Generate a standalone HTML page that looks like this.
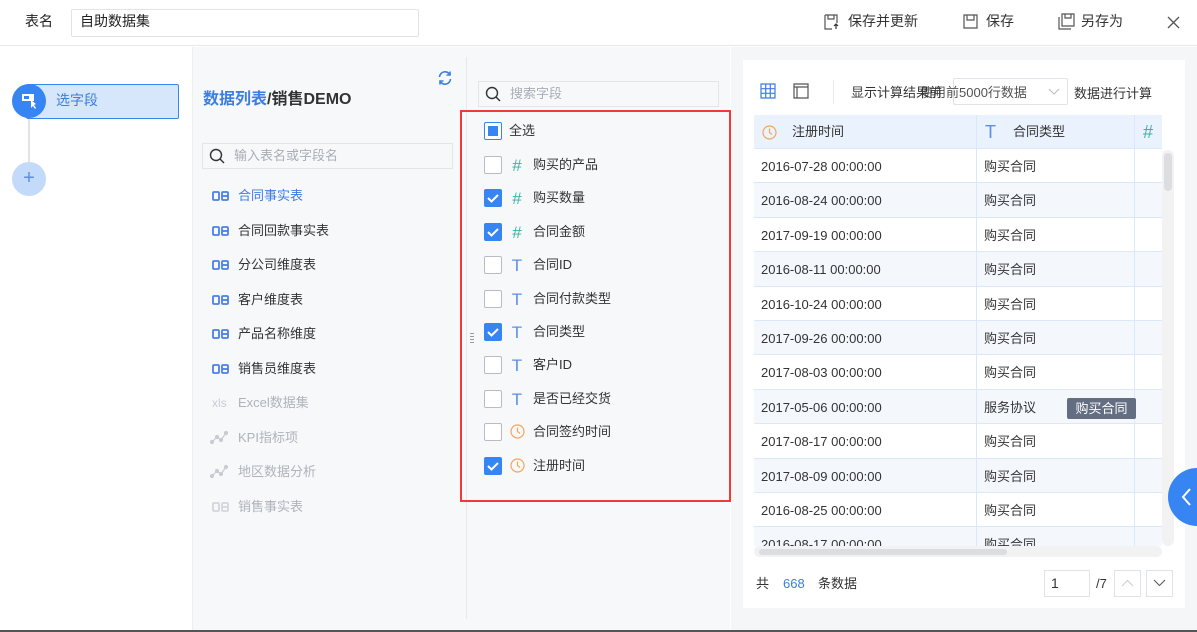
<!DOCTYPE html>
<html><head><meta charset="utf-8"><style>
*{box-sizing:border-box;margin:0;padding:0}
body{width:1197px;height:632px;overflow:hidden;background:#fff;font-family:"Liberation Sans","Noto Sans CJK SC",sans-serif;font-size:13px;line-height:17px;color:#333;position:relative}
.a{position:absolute}
.t{white-space:nowrap}
.cb{position:absolute;left:484px;width:18px;height:18px;border:1px solid #b7bcc6;border-radius:2px;background:#fff}
.cb.on{background:#3685f2;border-color:#3685f2}
.fi{position:absolute;left:509px;width:16px;text-align:center;font-size:17px;line-height:18px}
.fl{position:absolute;left:533px}
.li{position:absolute;left:212px}
.lt{position:absolute;left:238px}
.row{position:absolute;left:754px;width:408px;height:34.4px;border-bottom:1px solid #dbe8fb}
.row span{position:absolute;top:9px;line-height:17px}
.db{position:absolute;left:212px;width:17px;height:10px}
</style></head><body>
<div class="a" style="left:0;top:0;width:1197px;height:46px;border-bottom:1px solid #e6e8ec;background:#fff"></div>
<div class="a t" style="left:25px;top:13px;font-size:14px;color:#222">表名</div>
<div class="a" style="left:71px;top:9px;width:348px;height:28px;border:1px solid #e0e3e8;border-radius:2px"></div>
<div class="a t" style="left:80px;top:13px;font-size:14px;color:#222">自助数据集</div>
<svg class="a" style="left:824px;top:14px" width="16" height="16" viewBox="0 0 16 16" fill="none" stroke="#555" stroke-width="1.2"><path d="M1 1h12v8M1 1v14h7M4 1v4h6V1"/><path d="M12 15v-5M10 12l2-2 2 2" stroke="#333"/></svg>
<div class="a t" style="left:848px;top:13px;font-size:14px">保存并更新</div>
<svg class="a" style="left:963px;top:14px" width="15" height="15" viewBox="0 0 15 15" fill="none" stroke="#555" stroke-width="1.2"><path d="M1 1h13v13H1zM4 1v5h7V1"/></svg>
<div class="a t" style="left:986px;top:13px;font-size:14px">保存</div>
<svg class="a" style="left:1058px;top:13px" width="17" height="17" viewBox="0 0 17 17" fill="none" stroke="#555" stroke-width="1.2"><path d="M4 1h12v12H4zM7 1v4h6V1M1 4v12h12"/></svg>
<div class="a t" style="left:1081px;top:13px;font-size:14px">另存为</div>
<svg class="a" style="left:1167px;top:16px" width="13" height="13" viewBox="0 0 13 13" stroke="#555" stroke-width="1.3"><path d="M1 1l11 11M12 1L1 12"/></svg>

<div class="a" style="left:0;top:47px;width:192px;height:585px;background:#fff"></div>
<div class="a" style="left:28px;top:110px;width:2px;height:70px;background:#e2e4e8"></div>
<div class="a" style="left:26px;top:84px;width:153px;height:35px;background:#d6e6fb;border:1px solid #3685f2;border-radius:2px"></div>
<div class="a" style="left:12px;top:84px;width:34px;height:34px;border-radius:50%;background:#3685f2"></div>
<svg class="a" style="left:21px;top:93px" width="17" height="16" viewBox="0 0 17 16"><rect x="1" y="1" width="12" height="7" fill="#fff"/><rect x="3" y="3" width="5" height="3" fill="#3685f2"/><path d="M10 7l5 4-2 1 2 3-1 1-2-3-2 2z" fill="#fff"/></svg>
<div class="a t" style="left:56px;top:92px;font-size:14px;color:#3d7de0">选字段</div>
<div class="a" style="left:12px;top:162px;width:34px;height:34px;border-radius:50%;background:#c3dafa;color:#5b8fe6;text-align:center;line-height:32px;font-size:20px">+</div>

<div class="a" style="left:192px;top:47px;width:538px;height:585px;background:#f7f8fa;border-left:1px solid #eceef2"></div>
<div class="a" style="left:466px;top:57px;width:1px;height:562px;background:#e6e8ec"></div>
<div class="a t" style="left:203px;top:90px;font-size:16px;line-height:20px;font-weight:bold;color:#3d7de0">数据列表<span style="color:#333">/销售DEMO</span></div>
<svg class="a" style="left:437px;top:70px" width="16" height="16" viewBox="0 0 16 16" fill="none" stroke="#3d7de0" stroke-width="1.6"><path d="M2.5 7A5.5 5.5 0 0 1 13 5M13.5 9A5.5 5.5 0 0 1 3 11"/><path d="M13 1.5V5H9.5M3 14.5V11h3.5"/></svg>
<div class="a" style="left:202px;top:143px;width:251px;height:26px;border:1px solid #e3e5e9;background:#f7f8fa"></div>
<svg class="a" style="left:209px;top:148px" width="16" height="16" viewBox="0 0 16 16" fill="none" stroke="#333" stroke-width="1.4"><circle cx="7" cy="7" r="5.5"/><path d="M11 11l4 4"/></svg>
<div class="a t" style="left:234px;top:147px;color:#a8adb6">输入表名或字段名</div>
<div id="list"></div>
<div class="li t" style="top:395px;font-size:12px;color:#c8ccd2">xls</div><div class="lt t" style="top:394px;color:#aeb3bb">Excel数据集</div>
<svg class="a" style="left:210px;top:429px" width="18" height="16" viewBox="0 0 18 16" fill="#c8ccd2" stroke="#c8ccd2"><path d="M2 13l5-5 4 3 5-7" fill="none" stroke-width="1.2"/><circle cx="2" cy="13" r="1.6"/><circle cx="7" cy="8" r="1.6"/><circle cx="11" cy="11" r="1.6"/><circle cx="16" cy="4" r="1.6"/></svg><div class="lt t" style="top:429px;color:#aeb3bb">KPI指标项</div>
<svg class="a" style="left:210px;top:463px" width="18" height="16" viewBox="0 0 18 16" fill="#c8ccd2" stroke="#c8ccd2"><path d="M2 13l5-5 4 3 5-7" fill="none" stroke-width="1.2"/><circle cx="2" cy="13" r="1.6"/><circle cx="7" cy="8" r="1.6"/><circle cx="11" cy="11" r="1.6"/><circle cx="16" cy="4" r="1.6"/></svg><div class="lt t" style="top:463px;color:#aeb3bb">地区数据分析</div>

<div class="a" style="left:478px;top:81px;width:241px;height:26px;border:1px solid #e3e5e9;background:#f7f8fa"></div>
<svg class="a" style="left:485px;top:86px" width="16" height="16" viewBox="0 0 16 16" fill="none" stroke="#333" stroke-width="1.4"><circle cx="7" cy="7" r="5.5"/><path d="M11 11l4 4"/></svg>
<div class="a t" style="left:510px;top:85px;color:#a8adb6">搜索字段</div>
<div class="a" style="left:460px;top:110px;width:271px;height:392px;border:2px solid #f0393b"></div>
<div class="cb" style="top:122px;border-color:#3685f2"><div style="position:absolute;left:3px;top:3px;width:10px;height:10px;background:#3685f2"></div></div><div class="a t" style="left:509px;top:122px">全选</div>
<div id="fields"></div>
<div class="a" style="left:470px;top:333px;width:4px;height:12px;background:repeating-linear-gradient(#999 0 1px,transparent 1px 3px)"></div>
<div class="a" style="left:735px;top:333px;width:4px;height:12px;background:repeating-linear-gradient(#999 0 1px,transparent 1px 3px)"></div>

<div class="a" style="left:731px;top:47px;width:466px;height:585px;background:#f5f6f8"></div>
<div class="a" style="left:743px;top:60px;width:442px;height:548px;background:#fff"></div>
<svg class="a" style="left:760px;top:83px" width="16" height="16" viewBox="0 0 16 16" fill="none" stroke="#3d7de0" stroke-width="1.2"><path d="M1 1h14v14H1zM1 5.7h14M1 10.3h14M5.7 1v14M10.3 1v14"/></svg>
<svg class="a" style="left:793px;top:83px" width="16" height="16" viewBox="0 0 16 16" fill="none" stroke="#555" stroke-width="1.2"><path d="M1 1h14v14H1zM1 4h14M4 4v11"/></svg>
<div class="a" style="left:833px;top:80px;width:1px;height:24px;background:#e6e8ec"></div>
<div class="a t" style="left:851px;top:84px">显示计算结果前</div>
<div class="a" style="left:953px;top:78px;width:115px;height:27px;border:1px solid #e0e3e8;border-radius:2px;background:#fff"></div>
<div class="a t" style="left:920px;top:84px;opacity:.85">使用前5000行数据</div>
<svg class="a" style="left:1048px;top:88px" width="12" height="7" viewBox="0 0 12 7" fill="none" stroke="#bbb"><path d="M1 1l5 5 5-5"/></svg>
<div class="a t" style="left:1074px;top:85px">数据进行计算</div>

<div class="a" style="left:754px;top:115px;width:408px;height:34px;background:#eaf2fd;border-bottom:1px solid #dbe8fb"></div>
<svg class="a" style="left:762px;top:125px" width="15" height="15" viewBox="0 0 15 15" fill="none" stroke="#f5a55b" stroke-width="1.2"><circle cx="7.5" cy="7.5" r="6.5"/><path d="M7.5 3.5v4l2.5 2"/></svg>
<div class="a t" style="left:792px;top:123px">注册时间</div>
<div class="a t" style="left:985px;top:122px;font-size:18px;line-height:20px;color:#5b8fe6">T</div>
<div class="a t" style="left:1013px;top:123px">合同类型</div>
<div class="a t" style="left:1143px;top:122px;font-size:18px;line-height:20px;color:#3bb2a0">#</div>
<div id="rows"></div>
<div class="a" style="left:976px;top:115px;width:1px;height:431px;background:#dbe8fb"></div>
<div class="a" style="left:1134px;top:115px;width:1px;height:431px;background:#dbe8fb"></div>
<div class="a" style="left:754px;top:546px;width:430px;height:62px;background:#fff"></div>
<div class="a" style="left:754px;top:546px;width:408px;height:11px;background:#f2f2f3;border-radius:6px"></div>
<div class="a" style="left:759px;top:549px;width:248px;height:6px;background:#dcdde0;border-radius:3px"></div>
<div class="a" style="left:1162px;top:150px;width:12px;height:396px;background:#f2f2f3;border-radius:6px"></div>
<div class="a" style="left:1164px;top:153px;width:8px;height:38px;background:#dcdde0;border-radius:4px"></div>
<div class="a t" style="left:1067px;top:398px;width:69px;height:21px;background:#646e82;color:#fff;border-radius:2px;text-align:center;line-height:21px">购买合同</div>
<div class="a" style="left:1168px;top:468px;width:58px;height:58px;border-radius:50%;background:#3685f2"></div>
<svg class="a" style="left:1180px;top:487px" width="12" height="20" viewBox="0 0 12 20" fill="none" stroke="#fff" stroke-width="2"><path d="M10 2L3 10l7 8"/></svg>

<div class="a t" style="left:756px;top:575px">共</div>
<div class="a t" style="left:783px;top:575px;color:#3d7de0">668</div>
<div class="a t" style="left:818px;top:575px">条数据</div>
<div class="a" style="left:1044px;top:570px;width:46px;height:27px;border:1px solid #e0e3e8"></div>
<div class="a t" style="left:1051px;top:575px;font-size:14px">1</div>
<div class="a t" style="left:1096px;top:575px">/7</div>
<div class="a" style="left:1114px;top:570px;width:27px;height:27px;border:1px solid #e0e3e8"></div>
<svg class="a" style="left:1121px;top:579px" width="13" height="8" viewBox="0 0 13 8" fill="none" stroke="#ccc"><path d="M1 7l5.5-5.5L12 7"/></svg>
<div class="a" style="left:1146px;top:570px;width:27px;height:27px;border:1px solid #e0e3e8"></div>
<svg class="a" style="left:1153px;top:579px" width="13" height="8" viewBox="0 0 13 8" fill="none" stroke="#555"><path d="M1 1l5.5 5.5L12 1"/></svg>
<div class="a" style="left:0;top:630px;width:1197px;height:2px;background:#555"></div>

<script>
function db(y,c){return '<svg class="db" style="top:'+y+'px" viewBox="0 0 17 10" fill="none" stroke="'+c+'" stroke-width="1.8"><rect x="1" y="1" width="6" height="8" rx="1"/><rect x="10" y="1" width="6" height="8" rx="1"/><path d="M10 5h6"/></svg>';}
var L=[["合同事实表",187,"#3d7de0"],["合同回款事实表",222],["分公司维度表",256],["客户维度表",291],["产品名称维度",325],["销售员维度表",360],["销售事实表",498,"#aeb3bb"]];
var h="";L.forEach(function(x){h+=db(x[1]+4,x[2]=="#aeb3bb"?"#d3d6db":"#4c7fe8")+'<div class="lt t" style="top:'+x[1]+'px;color:'+(x[2]||"#333")+'">'+x[0]+'</div>';});
document.getElementById("list").outerHTML=h;
var f=[["购买的产品","#",0],["购买数量","#",1],["合同金额","#",1],["合同ID","T",0],["合同付款类型","T",0],["合同类型","T",1],["客户ID","T",0],["是否已经交货","T",0],["合同签约时间","C",0],["注册时间","C",1]];
h="";f.forEach(function(x,i){var y=156+i*33.4;
h+='<div class="cb'+(x[2]?' on':'')+'" style="top:'+y+'px">'+(x[2]?'<svg width="16" height="16" viewBox="0 0 16 16" style="position:absolute;left:0;top:0" fill="none" stroke="#fff" stroke-width="2"><path d="M3 8l3.5 3.5L13 5"/></svg>':'')+'</div>';
if(x[1]=="C")h+='<svg class="a" style="left:510px;top:'+(y+1)+'px" width="15" height="15" viewBox="0 0 15 15" fill="none" stroke="#f5a55b" stroke-width="1.2"><circle cx="7.5" cy="7.5" r="6.5"/><path d="M7.5 3.5v4l2.5 2"/></svg>';
else h+='<div class="fi" style="top:'+(y+1)+'px;color:'+(x[1]=="#"?"#3bb2a0":"#5b8fe6")+'">'+x[1]+'</div>';
h+='<div class="fl t" style="top:'+(y)+'px">'+x[0]+'</div>';});
document.getElementById("fields").outerHTML=h;
var d=["2016-07-28","2016-08-24","2017-09-19","2016-08-11","2016-10-24","2017-09-26","2017-08-03","2017-05-06","2017-08-17","2017-08-09","2016-08-25","2016-08-17"];
h="";d.forEach(function(x,i){h+='<div class="row" style="top:'+(149+i*34.4)+'px;background:'+(i%2?"#f4f8fd":"#fff")+'"><span style="left:7px">'+x+' 00:00:00</span><span style="left:230px">'+(i==7?"服务协议":"购买合同")+'</span></div>';});
document.getElementById("rows").outerHTML=h;
</script>
</body></html>
